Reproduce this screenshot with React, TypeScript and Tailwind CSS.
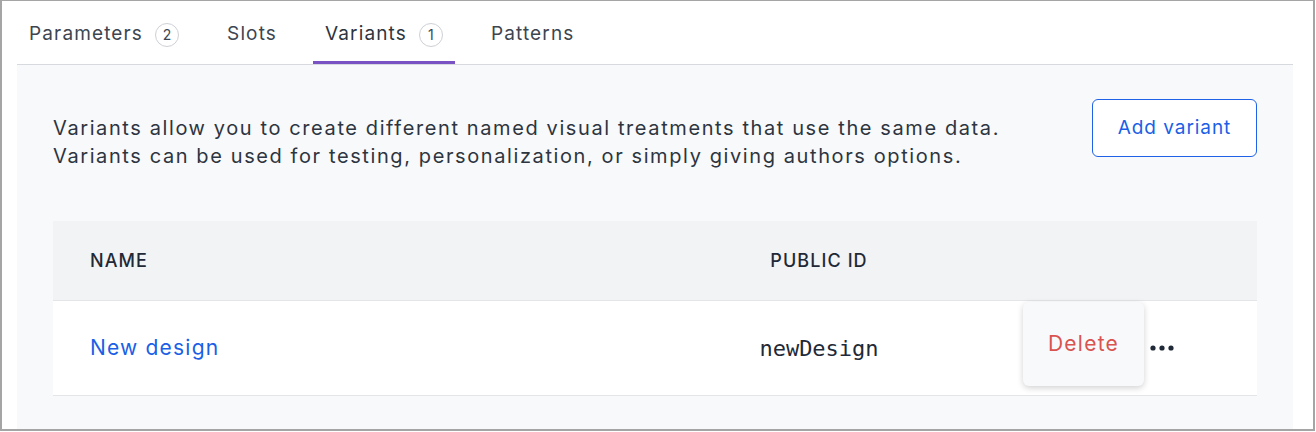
const tabs = [
  { label: 'Parameters', count: 2 },
  { label: 'Slots' },
  { label: 'Variants', count: 1, active: true },
  { label: 'Patterns' },
];

const Badge = ({ n }: { n: number }) => (
  <span className="ml-3 flex h-6 w-6 items-center justify-center rounded-full border border-[#cdd0d5] text-[14px] tracking-normal text-[#3d4550]">
    {n}
  </span>
);

const Dots = () => (
  <svg width="24" height="6" viewBox="0 0 24 6" className="fill-[#1f2937]">
    <circle cx="3" cy="3" r="2.6" />
    <circle cx="12" cy="3" r="2.6" />
    <circle cx="21" cy="3" r="2.6" />
  </svg>
);

export default function App() {
  return (
    <div
      className="h-[431px] w-[1315px] border-2 border-t border-[#a5a5a5] bg-white pl-[15px] pr-[20px] text-[#2d3540]"
      style={{ fontFamily: 'Inter, "Noto Sans", sans-serif' }}
    >
      <div className="flex h-[64px] gap-6 border-b border-[#d6d9de]">
        {tabs.map((t) => (
          <div
            key={t.label}
            className={
              'flex items-center px-3 text-[19px] tracking-[0.06em] ' +
              (t.active ? 'border-b-[3px] border-[#7952c3] pt-[7px] text-[#2d3540]' : 'pt-[4px] text-[#3d4550]')
            }
          >
            {t.label}
            {t.count !== undefined && <Badge n={t.count} />}
          </div>
        ))}
      </div>

      <div className="h-[364px] bg-[#f8f9fb] px-9 pt-[34px]">
        <div className="flex items-start justify-between">
          <p className="mt-[15px] text-[20px] leading-[28px] tracking-[0.08em]">
            Variants allow you to create different named visual treatments that use the same data.
            <br />
            Variants can be used for testing, personalization, or simply giving authors options.
          </p>
          <button className="h-[58px] w-[165px] rounded-md border border-[#1f62e8] bg-white text-[19px] tracking-[0.05em] text-[#1a5fe6]">
            Add variant
          </button>
        </div>

        <div className="mt-[51px]">
          <div className="flex h-[80px] items-center border-b border-[#e3e5e8] bg-[#f2f3f5] text-[18px] font-medium tracking-[0.06em] text-[#1f2937]">
            <div className="w-[620px] pl-[37px]">NAME</div>
            <div className="w-[292px] text-center">PUBLIC ID</div>
            <div className="flex-1" />
          </div>
          <div className="flex h-[95px] items-center border-b border-[#e3e5e8] bg-white">
            <div className="w-[620px] pl-[37px] text-[21px] tracking-[0.057em] text-[#1a5fe6]">New design</div>
            <div
              className="w-[292px] text-center text-[22px] text-[#1f2937]"
              style={{ fontFamily: '"DejaVu Sans Mono", monospace' }}
            >
              newDesign
            </div>
            <div className="relative flex h-full flex-1 items-center">
              <div className="absolute left-[58px] top-[1px] flex h-[84px] w-[121px] items-center justify-center rounded-md bg-[#f8f9fb] text-[21px] tracking-[0.06em] text-[#d9534f] shadow-[0_2px_6px_rgba(0,0,0,0.18)]">
                Delete
              </div>
              <div className="ml-[185px]">
                <Dots />
              </div>
            </div>
          </div>
        </div>
      </div>
    </div>
  );
}
